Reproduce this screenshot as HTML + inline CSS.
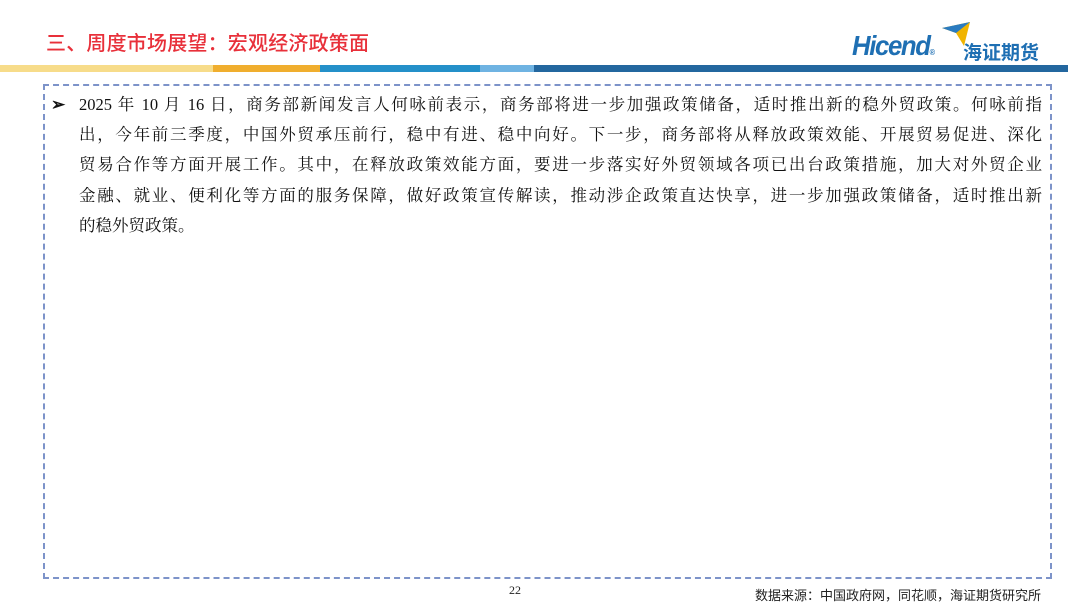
<!DOCTYPE html>
<html><head><meta charset="utf-8"><style>
body{margin:0;width:1080px;height:607px;background:#fff;position:relative;overflow:hidden;font-family:"Liberation Serif","Noto Serif CJK SC",serif;}
.title{position:absolute;left:46px;top:27px;font:500 20px "Liberation Sans","Noto Sans CJK SC",sans-serif;color:#e8303a;letter-spacing:0.2px}
.bar{position:absolute;top:65px;height:7px}
.box{position:absolute;left:43px;top:84px;width:1005px;height:491px;border:2px dashed #7d93c9;}
.txt{position:absolute;left:79px;top:90px;width:963px;font-size:16.5px;color:#111;line-height:30.2px}
.l{text-align:justify;text-align-last:justify;white-space:nowrap;height:30.2px}
.arr{position:absolute;left:51px;top:90px;font-size:17px;line-height:30px;color:#111;font-weight:bold}
.logo{position:absolute;left:852px;top:30px;font:italic bold 28px "Liberation Sans",sans-serif;color:#1e6fb3;letter-spacing:-1.5px;transform:scaleX(0.92);transform-origin:left}
.logocn{position:absolute;left:963px;top:38px;font:bold 19px "Noto Sans CJK SC",sans-serif;color:#1e6fb3}
</style></head><body>
<div class="title">三、周度市场展望：宏观经济政策面</div>
<div class="logo">Hicend<span style="font-size:8px;font-style:normal">®</span></div>
<svg style="position:absolute;left:940px;top:20px" width="34" height="30"><polygon points="2,8 30,2 24,26 16,13" fill="#f0b400"/><polygon points="2,8 30,2 16,13" fill="#2a7bc0"/></svg>
<div class="logocn">海证期货</div>
<div class="bar" style="left:0;width:213px;background:#f7dc8a"></div>
<div class="bar" style="left:213px;width:107px;background:#f0ae2e"></div>
<div class="bar" style="left:320px;width:160px;background:#2490c9"></div>
<div class="bar" style="left:480px;width:54px;background:#6fb3e2"></div>
<div class="bar" style="left:534px;width:534px;background:#23679f"></div>
<div class="box"></div>
<div class="arr">➢</div>
<div class="txt">
<div class="l">2025 年 10 月 16 日，商务部新闻发言人何咏前表示，商务部将进一步加强政策储备，适时推出新的稳外贸政策。何咏前指</div>
<div class="l">出，今年前三季度，中国外贸承压前行，稳中有进、稳中向好。下一步，商务部将从释放政策效能、开展贸易促进、深化</div>
<div class="l">贸易合作等方面开展工作。其中，在释放政策效能方面，要进一步落实好外贸领域各项已出台政策措施，加大对外贸企业</div>
<div class="l">金融、就业、便利化等方面的服务保障，做好政策宣传解读，推动涉企政策直达快享，进一步加强政策储备，适时推出新</div>
<div>的稳外贸政策。</div>
</div>
<div style="position:absolute;left:509px;top:583px;font-size:12px;color:#222">22</div>
<div style="position:absolute;left:755px;top:585px;font:13px 'Noto Sans CJK SC',sans-serif;color:#222">数据来源：中国政府网，同花顺，海证期货研究所</div>
</body></html>
